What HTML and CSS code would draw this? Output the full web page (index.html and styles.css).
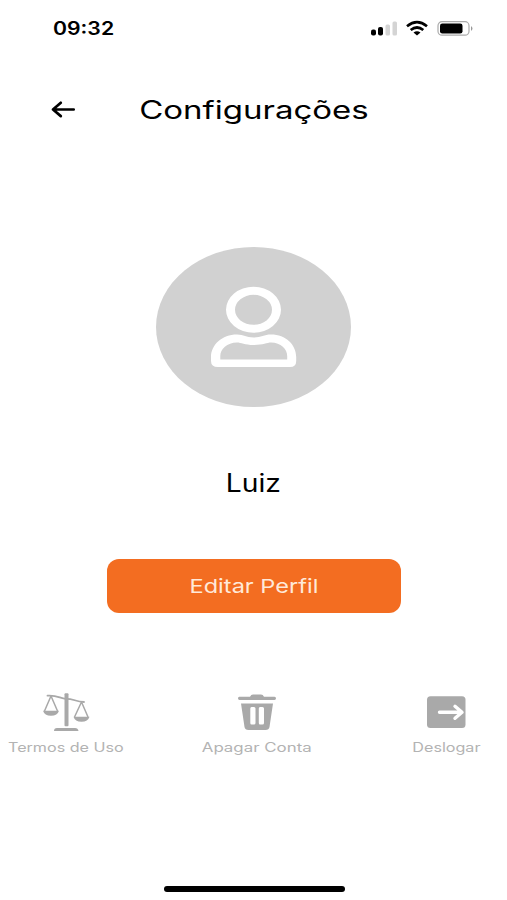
FILE: index.html
```html
<!DOCTYPE html>
<html lang="pt-BR">
<head>
<meta charset="utf-8">
<meta name="viewport" content="width=device-width, initial-scale=1">
<title>Configurações</title>
<link rel="stylesheet" href="styles.css">
</head>
<body>
<main class="screen">
  <div class="status">
    <span class="time wide">09:32</span>
    <svg class="status-icons" width="106" height="20" viewBox="0 0 106 20" aria-hidden="true">
      <rect x="1" y="10.500" width="5" height="6" rx="2"/>
      <rect x="8" y="8" width="5" height="8.500" rx="2"/>
      <rect x="15.500" y="5.500" width="4.500" height="11" rx="1.500" fill="#d4d4d4"/>
      <rect x="22.500" y="2.500" width="4.500" height="14" rx="1.500" fill="#d4d4d4"/>
      <g fill="none" stroke="#000" stroke-width="2.700">
        <path d="M37 7.200Q47 -.800 57 7.200"/>
        <path d="M40.700 11Q47 6 53.300 11"/>
      </g>
      <path d="M43.500 13.500Q47 11 50.500 13.500L47 16.500Z"/>
      <rect x="68" y="2.700" width="31" height="13.500" rx="4" fill="none" stroke="#aaa" stroke-width="1.200"/>
      <rect x="70" y="4.500" width="22.500" height="10" rx="2.300"/>
      <path d="M101 7q3 2.500 0 5z" fill="#999"/>
    </svg>
  </div>
  <header class="header">
    <svg class="back" width="26" height="20" viewBox="0 0 26 20" role="img" aria-label="Voltar">
      <path d="M23.700 9.500H3M10.800 2.800L3 9.500L10.800 16.100" fill="none" stroke="#000" stroke-width="2.700" stroke-linecap="round" stroke-linejoin="round"/>
    </svg>
    <h1 class="title wide">Configurações</h1>
  </header>
  <section class="profile">
    <div class="avatar">
      <svg width="86" height="82" viewBox="0 0 86 82" fill="#fff" aria-hidden="true">
        <path fill-rule="evenodd" d="M42.500 .800A27.500 23 0 1 0 42.500 46.800A27.500 23 0 1 0 42.500 .800ZM42.500 8.800A18.500 15 0 1 1 42.500 38.800A18.500 15 0 1 1 42.500 8.800Z"/>
        <path fill-rule="evenodd" d="M26 48.500C33 48.500 35 51.500 42.500 51.500C50 51.500 53 48.500 60 48.500C75 48.500 85.200 59 85.200 71V75Q85.200 81 79 81H7Q0 81 0 75V71C0 59 11 48.500 26 48.500ZM26 56.500C16 56.500 9.300 63 9.300 70V73.500H76.200V70C76.200 63 70 56.500 60 56.500C56 56.500 52 59 42.500 59C34 59 30 56.500 26 56.500Z"/>
      </svg>
    </div>
    <h2 class="name wide">Luiz</h2>
    <button class="edit" type="button"><span class="edit-text wide">Editar Perfil</span></button>
  </section>
  <nav class="actions">
    <a class="action">
      <svg width="48" height="40" viewBox="0 0 48 40" fill="#a9a9a9" aria-hidden="true">
        <rect x="22.500" y=".300" width="4" height="33" rx="1"/>
        <path d="M15 35h18q3 0 3.500 3H12q0-3 3-3z"/>
        <path d="M5.500 2.700C16 2 18 5.800 24 5.800C32 5.800 33 8.500 42 9" fill="none" stroke="#a9a9a9" stroke-width="1.800" stroke-linecap="round"/>
        <path d="M9 3L2.500 18M9 3L15.500 18M39.500 9L32.500 24M39.500 9L46 24" fill="none" stroke="#a9a9a9" stroke-width="1.500"/>
        <path d="M1 17.800h16q-1.500 5-8 5t-8-5zM31.500 23.800h16q-1.500 5-8 5t-8-5z"/>
      </svg>
      <span class="label wide">Termos de Uso</span>
    </a>
    <a class="action">
      <svg width="40" height="40" viewBox="0 0 40 40" fill="#a9a9a9" aria-hidden="true">
        <path d="M2.500 3.700H13Q14 1.500 16 1.500H24Q26 1.500 27 3.700H37.500Q39 3.700 39 5.300T37.500 7H2.500Q1 7 1 5.300T2.500 3.700Z"/>
        <path fill-rule="evenodd" d="M4 10.500H36L32.500 34Q32 37 28.500 37H11.500Q8 37 7.500 34ZM14.500 14Q13.300 14 13.300 15.500V30Q13.300 31.500 14.500 31.500H17Q18.500 31.500 18.500 30V15.500Q18.500 14 17 14ZM23 14Q21.800 14 21.800 15.500V30Q21.800 31.500 23 31.500H25.500Q27 31.500 27 30V15.500Q27 14 25.500 14Z"/>
      </svg>
      <span class="label wide delete">Apagar Conta</span>
    </a>
    <a class="action">
      <svg width="40" height="40" viewBox="0 0 40 40" aria-hidden="true">
        <rect x="1" y="3.300" width="38.500" height="31.700" rx="3.500" fill="#a9a9a9"/>
        <path d="M13.500 19.300H35M29 13.300L36 19.300L29 25.300" fill="none" stroke="#fff" stroke-width="3.400" stroke-linecap="round" stroke-linejoin="round"/>
      </svg>
      <span class="label wide">Deslogar</span>
    </a>
  </nav>
  <div class="home-bar"></div>
</main>
</body>
</html>
```
FILE: styles.css
```css
* { box-sizing: border-box; }
body {
  margin: 0;
  background: #fff;
  color: #000;
  font-family: Inter, "Liberation Sans", sans-serif;
}
.screen {
  display: flex;
  flex-direction: column;
  width: 507px;
  height: 900px;
  overflow: hidden;
}
.wide {
  display: block;
  width: max-content;
  white-space: nowrap;
  transform: scaleX(1.3);
}
.status {
  display: flex;
  align-items: center;
  justify-content: space-between;
  height: 57px;
  padding: 0 31px 0 53px;
}
.time {
  font-size: 18px;
  font-weight: 600;
  transform: scaleX(1.18);
  transform-origin: left;
}
.header {
  display: grid;
  grid-template-columns: 51px 1fr 51px;
  align-items: center;
  height: 105px;
}
.back { grid-column: 1; grid-row: 1; margin-left: 50px; }
.title {
  grid-column: 1 / -1;
  grid-row: 1;
  justify-self: center;
  margin: 0;
  font-size: 25px;
  font-weight: 400;
  transform: scaleX(1.32);
}
.profile {
  display: flex;
  flex-direction: column;
  align-items: center;
  padding-top: 85px;
}
.avatar {
  display: grid;
  place-items: center;
  width: 195px;
  height: 160px;
  border-radius: 50%;
  background: #d1d1d1;
}
.name {
  margin: 60px 0 0;
  font-size: 25px;
  font-weight: 400;
  line-height: 32px;
  transform: scaleX(1.13);
}
.edit {
  display: grid;
  place-items: center;
  width: 294px;
  height: 54px;
  margin-top: 60px;
  padding: 2px 0 0;
  border: 0;
  border-radius: 12px;
  background: #f36d21;
  color: #ffe9d9;
  font: inherit;
}
.edit-text {
  font-size: 19px;
  line-height: 24px;
  transform: scaleX(1.24);
}
.actions {
  display: grid;
  grid-template-columns: 115px 268px 110px;
  margin-top: 80px;
  padding-left: 8px;
}
.action {
  display: flex;
  flex-direction: column;
  align-items: center;
}
.label {
  margin-top: 7px;
  color: #b3b3b3;
  font-size: 12.5px;
  line-height: 16px;
  transform: scaleX(1.29);
}
.delete { transform: scaleX(1.35); }
.home-bar {
  width: 181px;
  height: 6px;
  margin: auto auto 8px 164px;
  border-radius: 3px;
  background: #000;
}
```
